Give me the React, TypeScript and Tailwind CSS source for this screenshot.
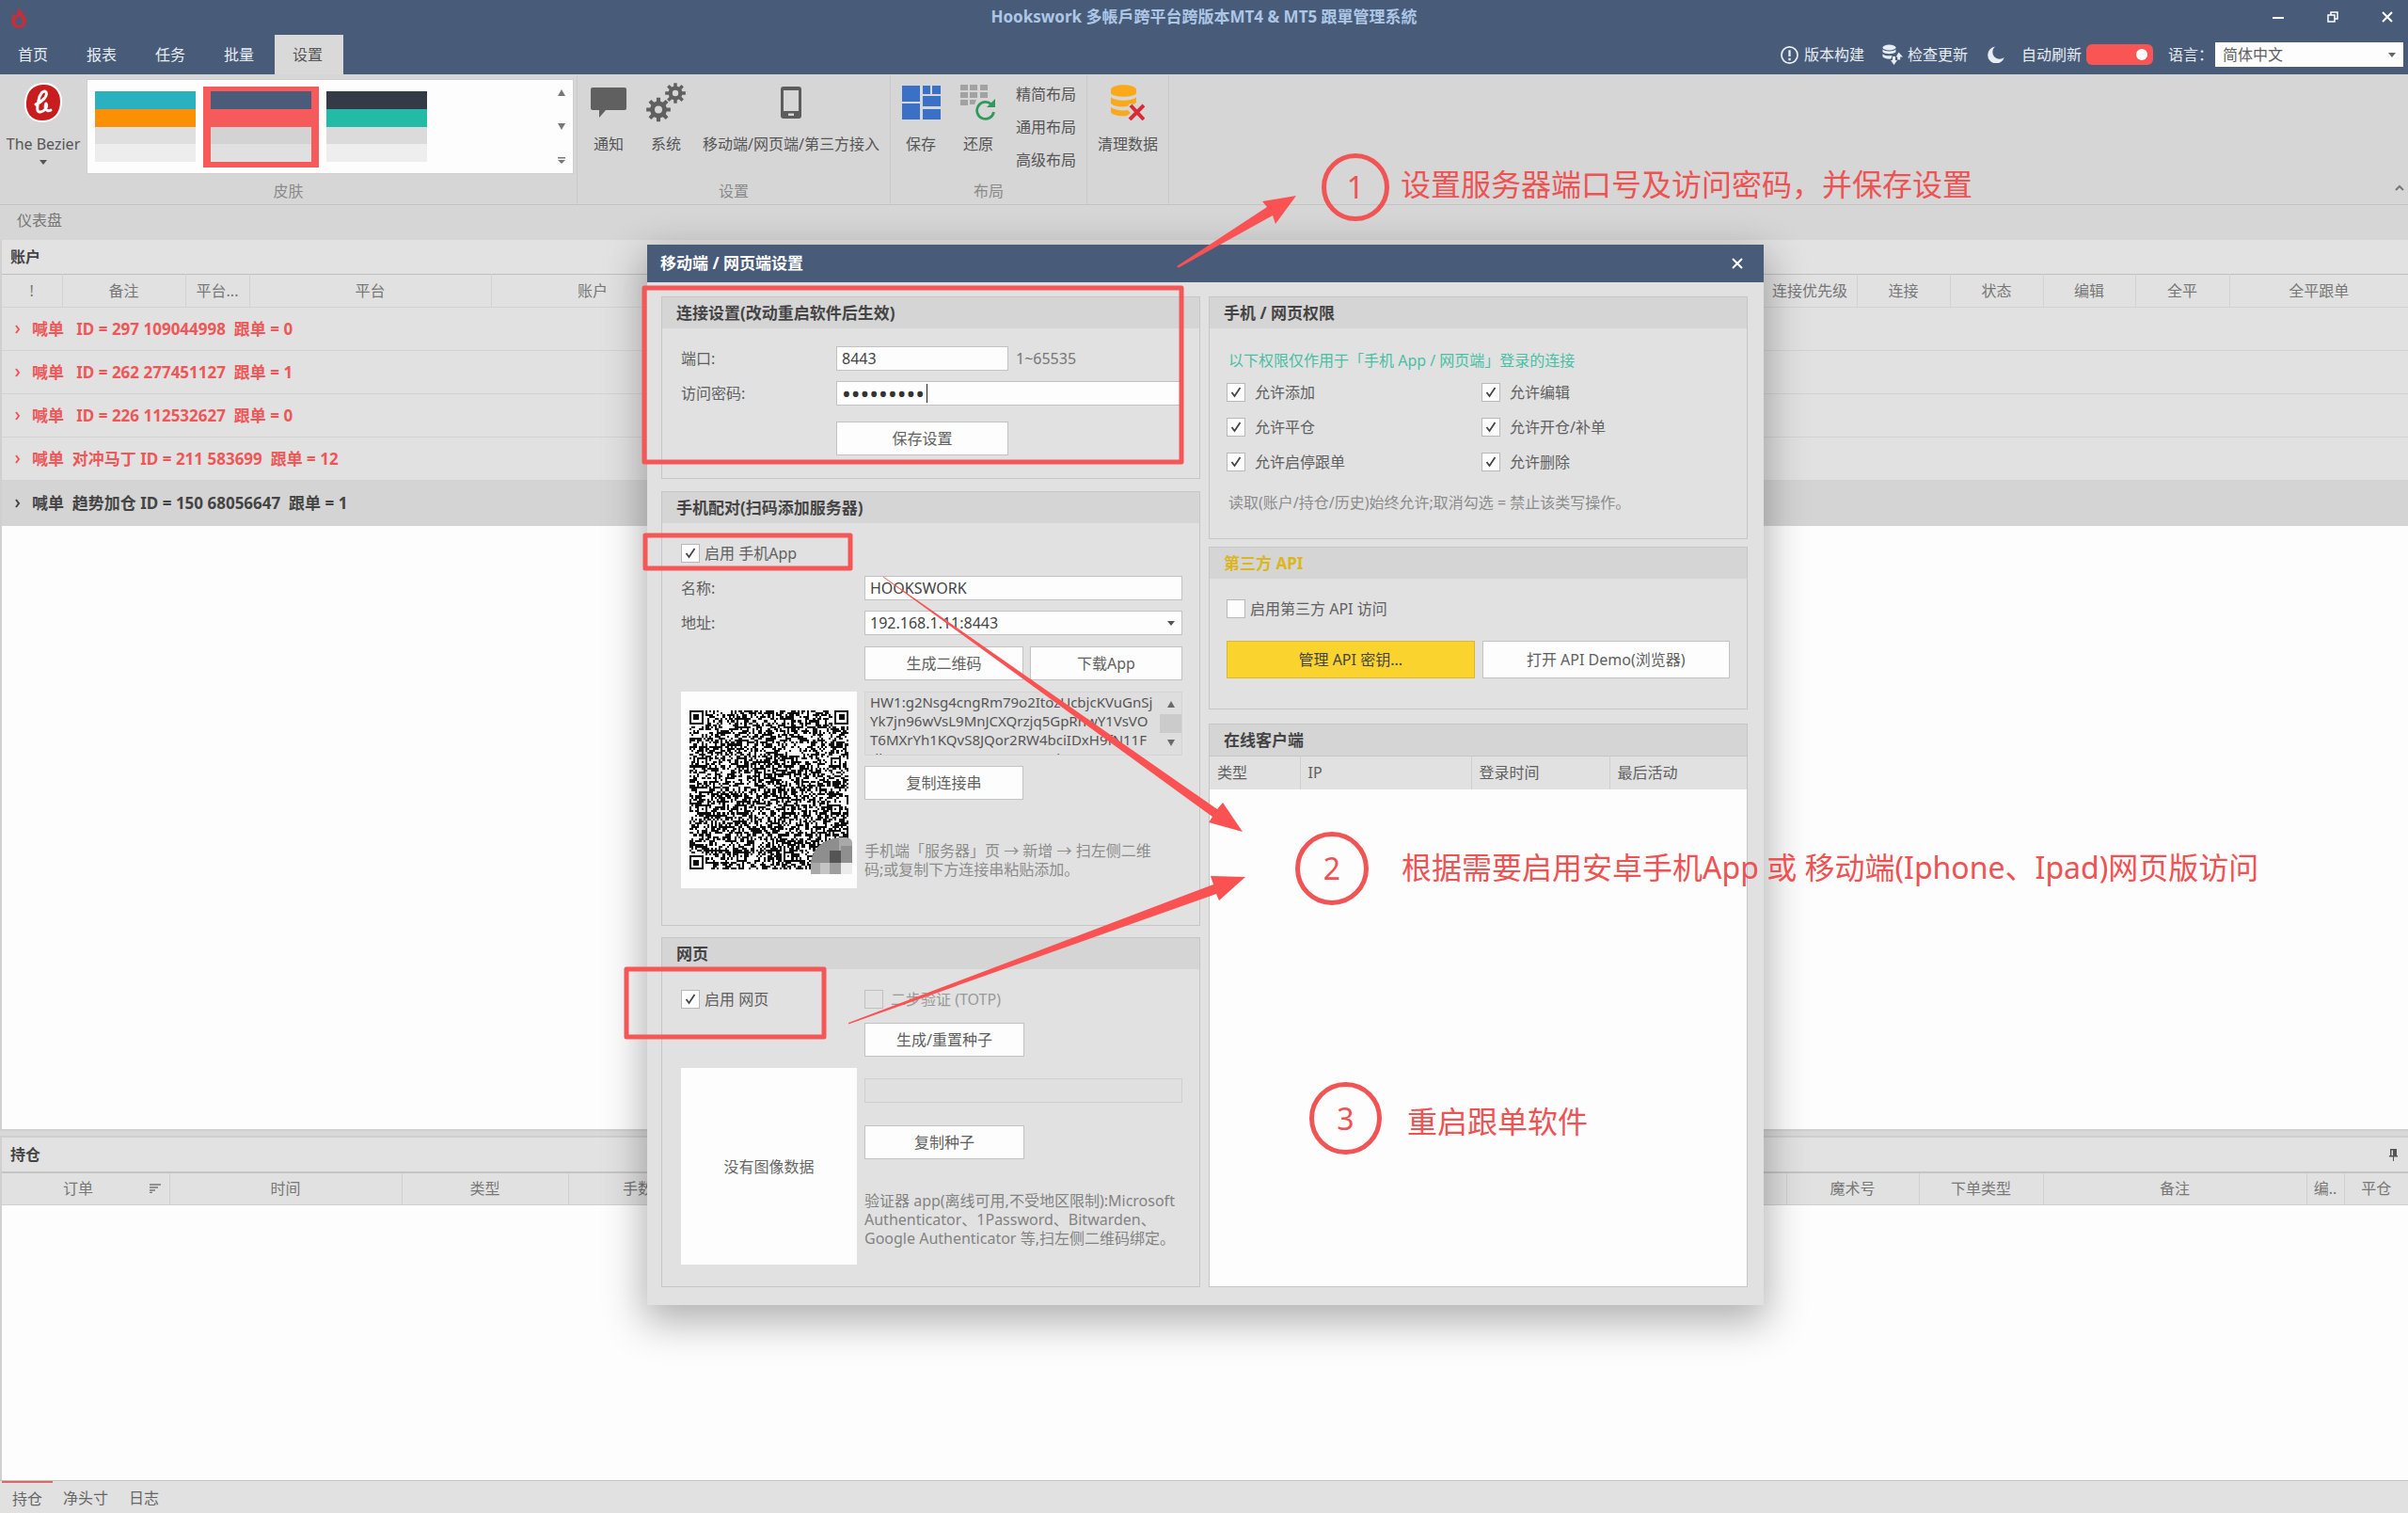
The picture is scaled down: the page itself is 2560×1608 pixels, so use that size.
import React from "react";

function gearPath(cx: number, cy: number, outer: number, inner: number, hole: number, teeth: number) {
  const step = (Math.PI * 2) / teeth;
  const point = (r: number, a: number) => `${(cx + r * Math.cos(a)).toFixed(2)} ${(cy + r * Math.sin(a)).toFixed(2)}`;
  let d = "";
  for (let i = 0; i < teeth; i++) {
    const a = i * step - Math.PI / 2;
    d += `${i === 0 ? "M" : "L"}${point(inner, a - step * 0.3)}`;
    d += `L${point(outer, a - step * 0.2)}L${point(outer, a + step * 0.2)}L${point(inner, a + step * 0.3)}`;
  }
  d += `ZM${cx - hole} ${cy}a${hole} ${hole} 0 1 0 ${hole * 2} 0a${hole} ${hole} 0 1 0 ${-hole * 2} 0Z`;
  return d;
}

const QR_SIZE = 81;

function qrPath() {
  const grid: boolean[][] = [];
  let seed = 20240611;
  for (let y = 0; y < QR_SIZE; y++) {
    grid.push([]);
    for (let x = 0; x < QR_SIZE; x++) {
      seed = (seed * 1103515245 + 12345) % 2147483648;
      grid[y].push(((seed >> 12) & 255) > 124);
    }
  }
  const square = (cx: number, cy: number, radius: number, dark: (ring: number) => boolean) => {
    for (let dy = -radius; dy <= radius; dy++)
      for (let dx = -radius; dx <= radius; dx++) {
        const x = cx + dx;
        const y = cy + dy;
        if (x < 0 || y < 0 || x >= QR_SIZE || y >= QR_SIZE) continue;
        grid[y][x] = dark(Math.max(Math.abs(dx), Math.abs(dy)));
      }
  };
  const spots = [6, 26, 50, 74];
  for (const cy of spots)
    for (const cx of spots) {
      const corner = (cx === 6 && cy === 6) || (cx === 74 && cy === 6) || (cx === 6 && cy === 74);
      if (!corner) square(cx, cy, 2, (r) => r !== 1);
    }
  square(3, 3, 4, (r) => r === 3 || r < 2);
  square(77, 3, 4, (r) => r === 3 || r < 2);
  square(3, 77, 4, (r) => r === 3 || r < 2);
  let d = "";
  for (let y = 0; y < QR_SIZE; y++) for (let x = 0; x < QR_SIZE; x++) if (grid[y][x]) d += `M${x} ${y}h1v1h-1z`;
  return d;
}

const QR_PATH = qrPath();

function QrCode() {
  return (
    <svg viewBox="0 0 81 81" className="block size-[169px]" shapeRendering="crispEdges" role="img" aria-label="二维码">
      <path d={QR_PATH} fill="#0c0c0c" />
    </svg>
  );
}

function Caret({ className = "" }: { className?: string }) {
  return (
    <svg viewBox="0 0 8 5" className={`h-[5px] w-2 ${className}`} fill="currentColor" aria-hidden="true">
      <path d="M0 0h8L4 5z" />
    </svg>
  );
}

function RibbonButton({ label, icon, className }: { label: string; icon: React.ReactNode; className: string }) {
  return (
    <button type="button" className={`flex flex-col items-center ${className}`}>
      <span className="flex h-[56px] items-center justify-center pb-[9px]">{icon}</span>
      <span className="leading-6 whitespace-nowrap">{label}</span>
    </button>
  );
}

function Swatch({ colors, selected = false }: { colors: [string, string, string, string]; selected?: boolean }) {
  return (
    <button
      type="button"
      aria-pressed={selected}
      aria-label="皮肤"
      className={`flex h-[86px] w-[123px] flex-col px-2 pt-[5px] pb-[6px] ${selected ? "bg-[#f65a5a]" : ""}`}
    >
      {colors.map((c) => (
        <span key={c} className={`w-full flex-1 ${c}`} />
      ))}
    </button>
  );
}

function Check({
  label,
  checked = false,
  disabled = false,
  gap = "gap-[5px]",
}: {
  label: string;
  checked?: boolean;
  disabled?: boolean;
  gap?: string;
}) {
  return (
    <label className={`flex w-fit items-center leading-6 ${gap} ${disabled ? "text-[#999]" : "text-[#606060]"}`}>
      <span className="relative size-[20px] shrink-0">
        <input
          type="checkbox"
          defaultChecked={checked}
          disabled={disabled}
          className="peer block size-[20px] appearance-none border border-[#b8b8b8] bg-[#fdfdfd] disabled:border-[#c0c0c0] disabled:bg-transparent"
        />
        <svg
          viewBox="0 0 20 20"
          className="pointer-events-none absolute inset-0 hidden size-5 peer-checked:block"
          fill="none"
          stroke="#444"
          strokeWidth="1.8"
          aria-hidden="true"
        >
          <path d="M5.500 10l3 4L14.500 5" />
        </svg>
      </span>
      <span className="whitespace-nowrap">{label}</span>
    </label>
  );
}

function Panel({
  title,
  titleColor = "text-[#444]",
  className = "",
  children,
}: {
  title: string;
  titleColor?: string;
  className?: string;
  children: React.ReactNode;
}) {
  return (
    <section className={`flex flex-col border border-[#c6c6c6] ${className}`}>
      <h3 className={`bg-[#d5d5d5] px-[15px] text-[17px] leading-[33px] font-bold ${titleColor}`}>{title}</h3>
      {children}
    </section>
  );
}

function Button({ children, className }: { children: React.ReactNode; className: string }) {
  return (
    <button type="button" className={`border text-center whitespace-nowrap ${className}`}>
      {children}
    </button>
  );
}

const whiteButton = "border-[#c2c2c2] bg-[#fdfdfd] text-[#606060]";

function ConnectionPanel() {
  return (
    <Panel title="连接设置(改动重启软件后生效)" className="h-[194px]">
      <div className="grid grid-cols-[165px_1fr] items-center pt-[19px] pr-[18px] pl-5">
        <label htmlFor="port" className="leading-6">
          端口:
        </label>
        <div className="flex items-center gap-2">
          <input id="port" defaultValue="8443" className="h-[26px] w-[183px] border border-[#c2c2c2] bg-[#fdfdfd] px-[5px] text-[#444] outline-none" />
          <span className="text-[#777]">1~65535</span>
        </div>
        <label htmlFor="password" className="mt-[11px] leading-6">
          访问密码:
        </label>
        <div className="mt-[11px] flex h-[26px] items-center overflow-hidden border border-[#c2c2c2] bg-[#fdfdfd] pl-[5px]">
          <input
            id="password"
            type="password"
            readOnly
            value="hookswork"
            className="h-6 w-[90px] bg-transparent text-[26px] leading-6 text-[#333] outline-none"
          />
          <span className="h-5 w-px bg-[#222]" />
        </div>
        <Button className={`col-start-2 mt-[17px] h-[36px] w-[183px] ${whiteButton}`}>保存设置</Button>
      </div>
    </Panel>
  );
}

const connectionString = [
  "HW1:g2Nsg4cngRm79o2ItozUcbjcKVuGnSj",
  "Yk7jn96wVsL9MnJCXQrzjq5GpRnwY1VsVO",
  "T6MXrYh1KQvS8JQor2RW4bciIDxH9fN11F",
  "dkpCIVTz0uTF2vrcCMMDp/ybZ1vVB4yVR",
].join("\n");

function PairingPanel() {
  return (
    <Panel title="手机配对(扫码添加服务器)" className="h-[462px]">
      <div className="pt-[20px] pr-[18px] pl-5">
        <Check label="启用 手机App" checked />
        <div className="mt-3 grid grid-cols-[195px_1fr] items-center gap-y-[11px]">
          <label htmlFor="name" className="leading-6">
            名称:
          </label>
          <input id="name" defaultValue="HOOKSWORK" className="h-[26px] border border-[#c2c2c2] bg-[#fdfdfd] px-[5px] text-[#444] outline-none" />
          <label htmlFor="address" className="leading-6">
            地址:
          </label>
          <div className="relative">
            <select id="address" className="block h-[26px] w-full appearance-none border border-[#c2c2c2] bg-[#fdfdfd] px-[5px] text-[#444] outline-none">
              <option>192.168.1.11:8443</option>
            </select>
            <Caret className="pointer-events-none absolute top-[11px] right-2 text-[#555]" />
          </div>
        </div>
        <div className="mt-[12px] flex justify-end gap-[7px]">
          <Button className={`h-[36px] w-[169px] ${whiteButton}`}>生成二维码</Button>
          <Button className={`h-[36px] w-[162px] ${whiteButton}`}>下载App</Button>
        </div>
        <div className="mt-[12px] flex gap-2">
          <div className="relative h-[209px] w-[187px] shrink-0 bg-[#fdfdfd] pt-5 pl-[9px]">
            <QrCode />
            <svg viewBox="0 0 44 39" className="absolute top-[155px] left-[138px] h-[39px] w-11" aria-hidden="true">
              <path d="M0 26C2 12 12 2 30 0V39H0z" fill="#8e8e8e" />
              <path d="M30 0h8q6 1 6 6v20H30z" fill="#a9a9a9" />
              <path d="M20 14h12v13H20z" fill="#555" />
              <path d="M32 9h12v18H32z" fill="#8f8f8f" />
              <path d="M0 27h10v12H0z" fill="#a8a8a8" />
              <path d="M10 27h10v12H10z" fill="#c4c4c4" />
              <path d="M20 27h12v12H20z" fill="#9e9e9e" />
              <path d="M32 27h12v12H32z" fill="#ececec" />
            </svg>
          </div>
          <div className="flex min-w-0 flex-1 flex-col items-start">
            <div className="flex h-[68px] w-full border border-[#d4d4d4] bg-[#dedede]">
              <textarea
                readOnly
                wrap="off"
                aria-label="连接串"
                defaultValue={connectionString}
                className="block h-full min-w-0 flex-1 resize-none overflow-hidden pl-[5px] text-[15px] leading-5 text-[#555] outline-none"
              />
              <div className="flex w-[23px] flex-col items-center justify-between py-[9px] text-[#6a6a6a]" aria-hidden="true">
                <svg viewBox="0 0 8 7" className="h-[7px] w-2" fill="currentColor">
                  <path d="M4 0l4 7H0z" />
                </svg>
                <span className="h-5 w-full bg-[#cbcbcb]" />
                <svg viewBox="0 0 8 7" className="h-[7px] w-2" fill="currentColor">
                  <path d="M0 0h8L4 7z" />
                </svg>
              </div>
            </div>
            <Button className={`mt-[11px] h-[36px] w-[169px] ${whiteButton}`}>复制连接串</Button>
            <p className="mt-[44px] leading-5 text-[#8c8c8c]">
              手机端「服务器」页 → 新增 → 扫左侧二维
              <br />
              码;或复制下方连接串粘贴添加。
            </p>
          </div>
        </div>
      </div>
    </Panel>
  );
}

function WebPanel() {
  return (
    <Panel title="网页" className="h-[372px]">
      <div className="flex gap-2 pt-[20px] pr-[18px] pl-5">
        <div className="w-[187px] shrink-0">
          <Check label="启用 网页" checked />
          <div className="mt-[61px] flex h-[209px] items-center justify-center bg-[#fdfdfd] text-[#666]">没有图像数据</div>
        </div>
        <div className="flex min-w-0 flex-1 flex-col items-start">
          <Check label="二步验证 (TOTP)" disabled gap="gap-[8px]" />
          <Button className={`mt-[13px] h-[36px] w-[170px] ${whiteButton}`}>生成/重置种子</Button>
          <input readOnly aria-label="种子" className="mt-[23px] h-[26px] w-full border border-[#cfcfcf] bg-[#e0e0e0]" />
          <Button className={`mt-[24px] h-[36px] w-[170px] ${whiteButton}`}>复制种子</Button>
          <p className="mt-[34px] leading-5 whitespace-nowrap text-[#838383]">
            验证器 app(离线可用,不受地区限制):Microsoft
            <br />
            Authenticator、1Password、Bitwarden、
            <br />
            Google Authenticator 等,扫左侧二维码绑定。
          </p>
        </div>
      </div>
    </Panel>
  );
}

function PermissionsPanel() {
  return (
    <Panel title="手机 / 网页权限" className="h-[258px]">
      <div className="pt-[22px] pr-[18px] pl-[18px]">
        <p className="pl-[2px] leading-6 text-[#48bfa5]">以下权限仅作用于「手机 App / 网页端」登录的连接</p>
        <div className="mt-[10px] grid grid-cols-[271px_1fr] gap-y-[13px]">
          <Check label="允许添加" checked gap="gap-[10px]" />
          <Check label="允许编辑" checked gap="gap-[10px]" />
          <Check label="允许平仓" checked gap="gap-[10px]" />
          <Check label="允许开仓/补单" checked gap="gap-[10px]" />
          <Check label="允许启停跟单" checked gap="gap-[10px]" />
          <Check label="允许删除" checked gap="gap-[10px]" />
        </div>
        <p className="mt-[19px] pl-[2px] leading-6 text-[#8c8c8c]">读取(账户/持仓/历史)始终允许;取消勾选 = 禁止该类写操作。</p>
      </div>
    </Panel>
  );
}

function ApiPanel() {
  return (
    <Panel title="第三方 API" titleColor="text-[#dbb61c]" className="mt-[8px] h-[173px]">
      <div className="pt-[20px] pr-[18px] pl-[18px]">
        <Check label="启用第三方 API 访问" />
        <div className="mt-[22px] flex gap-2">
          <Button className="h-[40px] flex-1 border-[#d9b92e] bg-[#fad32f] text-[#444]">管理 API 密钥...</Button>
          <Button className={`h-[40px] flex-1 ${whiteButton}`}>打开 API Demo(浏览器)</Button>
        </div>
      </div>
    </Panel>
  );
}

function ClientsPanel() {
  return (
    <Panel title="在线客户端" className="mt-[15px] flex-1 bg-[#fdfdfd]">
      <table className="w-full table-fixed border-t border-[#c6c6c6] text-left">
        <colgroup>
          <col className="w-[96px]" />
          <col className="w-[182px]" />
          <col className="w-[147px]" />
          <col />
        </colgroup>
        <thead>
          <tr className="h-[35px] bg-[#e1e1e1]">
            {["类型", "IP", "登录时间", "最后活动"].map((h) => (
              <th key={h} className="border-r border-[#cfcfcf] pl-[8px] font-normal last:border-r-0">
                {h}
              </th>
            ))}
          </tr>
        </thead>
      </table>
    </Panel>
  );
}

function Annotations() {
  return (
    <div className="pointer-events-none absolute inset-0 text-[32px] leading-10 whitespace-nowrap text-[#ee5253]">
      <svg viewBox="688 260 1187 1127" className="absolute top-0 left-0 h-[1127px] w-[1187px] overflow-visible" aria-hidden="true">
        <g fill="none" stroke="#f55656" strokeWidth="5" strokeLinejoin="round">
          <path d="M685 306h571v185H685z" />
          <path d="M686 569h218v35H686z" />
          <path d="M666 1030h210v72H666z" />
        </g>
        <g fill="#fa5252">
          <path d="M1251 283L1347 220L1342 214L1378 208L1356 238L1353 229L1253 284.500z" />
          <path d="M938 612L1294 860L1300 853L1321 884L1285 874L1289 868L939 613.500z" />
          <path d="M902 1087L1290 940L1287 931L1324 932L1296 957L1293 950L902 1088.500z" />
        </g>
      </svg>
      <span className="absolute top-[-97px] left-[717px] flex size-[72px] items-center justify-center rounded-full border-5 border-[#f05454]">1</span>
      <span className="absolute top-[-84px] left-[801px]">设置服务器端口号及访问密码，并保存设置</span>
      <span className="absolute top-[624px] left-[689px] flex size-[78px] items-center justify-center rounded-full border-5 border-[#f05454]">2</span>
      <span className="absolute top-[642px] left-[802px]">根据需要启用安卓手机App 或 移动端(Iphone、Ipad)网页版访问</span>
      <span className="absolute top-[890px] left-[704px] flex size-[77px] items-center justify-center rounded-full border-5 border-[#f05454]">3</span>
      <span className="absolute top-[912px] left-[808px]">重启跟单软件</span>
    </div>
  );
}

function SettingsDialog() {
  return (
    <div className="absolute inset-x-0 top-[260px] flex justify-center pl-[3px]">
      <div
        role="dialog"
        aria-labelledby="dialog-title"
        className="relative w-[1187px] bg-[#e1e1e1] text-[#606060] shadow-[0_14px_40px_4px_rgba(0,0,0,0.3)]"
      >
        <header className="flex h-[40px] items-center justify-between bg-[#485b79] pr-[18px] pl-[14px] text-white">
          <h2 id="dialog-title" className="text-[17px] font-bold">
            移动端 / 网页端设置
          </h2>
          <button type="button" aria-label="关闭" className="p-1">
            <svg viewBox="0 0 12 12" className="size-3" fill="none" stroke="currentColor" strokeWidth="2">
              <path d="M1 1l10 10M11 1L1 11" />
            </svg>
          </button>
        </header>
        <div className="grid grid-cols-2 gap-[9px] pt-[15px] pr-[17px] pb-[19px] pl-[15px]">
          <div className="flex flex-col">
            <ConnectionPanel />
            <div className="h-[13px]" />
            <PairingPanel />
            <div className="h-[12px]" />
            <WebPanel />
          </div>
          <div className="flex flex-col">
            <PermissionsPanel />
            <ApiPanel />
            <ClientsPanel />
          </div>
        </div>
        <Annotations />
      </div>
    </div>
  );
}

function TitleBar() {
  return (
    <div className="grid h-[37px] grid-cols-[1fr_auto_1fr] items-center pb-[2px]">
      <svg viewBox="0 0 18 24" className="ml-[11px] h-6 w-[18px]" aria-hidden="true">
        <path d="M8 0C9 5 17 9 17 16a8 8 0 0 1-16 0C1 12 3 11 4 8c1 1 1.500 2 1.500 3C8 8 8.500 4 8 0zM9.500 10C8 13 5.500 14 5.500 17a3.700 3.700 0 0 0 7.400 0C13 14 10.500 13 9.500 10z" fill="#c2303c" fillRule="evenodd" />
      </svg>
      <h1 className="text-[17px] font-bold text-[#adc6e6]">Hookswork 多帳戶跨平台跨版本MT4 &amp; MT5 跟單管理系統</h1>
      <div className="flex justify-end gap-[46px] pr-4 text-white">
        <button type="button" aria-label="最小化">
          <svg viewBox="0 0 12 12" className="size-3" stroke="currentColor" strokeWidth="2">
            <path d="M0 7h12" />
          </svg>
        </button>
        <button type="button" aria-label="还原窗口">
          <svg viewBox="0 0 12 12" className="size-3" fill="none" stroke="currentColor" strokeWidth="1.500">
            <path d="M1 4h7v7H1zM4 4V1h7v7H8" />
          </svg>
        </button>
        <button type="button" aria-label="关闭窗口">
          <svg viewBox="0 0 12 12" className="size-3" fill="none" stroke="currentColor" strokeWidth="2">
            <path d="M1 1l10 10M11 1L1 11" />
          </svg>
        </button>
      </div>
    </div>
  );
}

function TabBar() {
  return (
    <div className="flex h-[42px] text-[#e8edf4]">
      <nav className="flex">
        {["首页", "报表", "任务", "批量"].map((t) => (
          <button key={t} type="button" className="w-[73px] pr-[3px]">
            {t}
          </button>
        ))}
        <button type="button" className="w-[73px] bg-[#d9d9d9] pr-[3px] text-[#555]">
          设置
        </button>
      </nav>
      <div className="ml-auto flex items-center pr-[5px]">
        <button type="button" className="flex items-center gap-[6px]">
          <svg viewBox="0 0 20 20" className="size-[19px]" fill="none" stroke="currentColor" strokeWidth="1.800" aria-hidden="true">
            <circle cx="10" cy="10" r="9" />
            <path d="M10 4.500v7M10 13.500v2.500" strokeWidth="2.400" />
          </svg>
          版本构建
        </button>
        <button type="button" className="ml-[19px] flex items-center gap-[5px]">
          <svg viewBox="0 0 22 22" className="size-[22px]" fill="currentColor" aria-hidden="true">
            <ellipse cx="7.500" cy="3.500" rx="7" ry="3" />
            <path d="M.5 5.500c2 2.500 12 2.500 14 0v2.800c-2 2.500-12 2.500-14 0zM.5 10.200c2 2.300 7 2.500 10 1.800l-1 3.500C6 16 2 15 .5 13.200z" />
            <path d="M17.500 8.500L22 13.500h-2.800v3h-3v-3h-1.500zM11 13h3v4h2l-3.500 5L9 17h2z" />
          </svg>
          检查更新
        </button>
        <button type="button" aria-label="深色模式" className="ml-[21px]">
          <svg viewBox="0 0 18 18" className="size-[18px]" fill="currentColor">
            <path d="M8 .5a9 9 0 1 0 9.800 11.500A7 7 0 0 1 8 .5z" />
          </svg>
        </button>
        <span className="ml-[18px]">自动刷新</span>
        <button type="button" role="switch" aria-checked="true" aria-label="自动刷新" className="ml-[5px] flex h-[22px] w-[71px] items-center justify-end rounded-[6px] bg-[#f95555] pr-[6px]">
          <span className="size-3 rounded-full bg-white" />
        </button>
        <label htmlFor="language" className="ml-[16px]">
          语言：
        </label>
        <div className="relative ml-[2px]">
          <select id="language" className="block h-[26px] w-[200px] appearance-none bg-[#fdfdfd] px-2 text-[#606060] outline-none">
            <option>简体中文</option>
          </select>
          <Caret className="pointer-events-none absolute top-[11px] right-2 text-[#666]" />
        </div>
      </div>
    </div>
  );
}

const groupClass = "relative flex flex-col border-r border-[#c9c9c9]";

function Ribbon() {
  return (
    <div className="flex h-[139px] border-b border-[#c4c4c4] bg-[#d6d6d6] pt-[1px] text-[#555]">
      <div className={`${groupClass} w-[614px]`}>
        <div className="flex">
          <button type="button" className="flex w-[92px] flex-col items-center pt-2">
            <svg viewBox="0 0 42 42" className="size-[42px]" aria-hidden="true">
              <path d="M20 1C33 0 40 9 40 20c0 13-8 21-20 21C8 41 1 33 2 20 3 9 9 2 20 1z" fill="#c91c1f" stroke="#fff" strokeWidth="2" />
              <path d="M13 23C20 20 26 14 24 10C21 7 17 12 16 19C14 26 14 32 18 31C23 30 26 25 24 22C22 26 24 32 29 29" fill="none" stroke="#fff" strokeWidth="3" strokeLinecap="round" strokeLinejoin="round" />
            </svg>
            <span className="mt-[11px] leading-6 whitespace-nowrap">The Bezier</span>
            <Caret className="mt-[5px]" />
          </button>
          <div className="mt-1 flex h-[101px] w-[518px] items-start border border-[#cfcfcf] bg-[#fdfdfd] pt-[7px] pr-[6px]">
            <Swatch colors={["bg-[#29b1c0]", "bg-[#fb9004]", "bg-[#dfdfdf]", "bg-[#ededed]"]} />
            <Swatch selected colors={["bg-[#4a5c7a]", "bg-[#f75a5b]", "bg-[#d3d3d3]", "bg-[#e0e0e0]"]} />
            <Swatch colors={["bg-[#343b46]", "bg-[#21bba6]", "bg-[#dbdbdb]", "bg-[#eeeeef]"]} />
            <div className="ml-auto flex h-[82px] w-3 flex-col items-center justify-between pt-[3px] text-[#777]">
              <svg viewBox="0 0 8 7" className="h-[7px] w-2" fill="currentColor" aria-hidden="true">
                <path d="M4 0l4 7H0z" />
              </svg>
              <svg viewBox="0 0 8 7" className="h-[7px] w-2" fill="currentColor" aria-hidden="true">
                <path d="M0 0h8L4 7z" />
              </svg>
              <svg viewBox="0 0 8 7" className="h-[7px] w-2" fill="currentColor" aria-hidden="true">
                <path d="M0 0h8v1.500H0zM0 3h8L4 7z" />
              </svg>
            </div>
          </div>
        </div>
        <span className="mt-auto pb-[2px] text-center leading-6 text-[#8a8a8a]">皮肤</span>
      </div>
      <div className={`${groupClass} w-[333px]`}>
        <div className="flex pt-[5px] pl-1">
          <RibbonButton
            label="通知"
            className="w-[58px]"
            icon={
              <svg viewBox="0 0 38 32" className="h-8 w-[38px]" fill="#606060">
                <path d="M2 0h34q2 0 2 2v20q0 2-2 2H16l-7 8v-8H2q-2 0-2-2V2Q0 0 2 0z" />
              </svg>
            }
          />
          <RibbonButton
            label="系统"
            className="w-[64px]"
            icon={
              <svg viewBox="0 0 42 42" className="size-[42px]" fill="#606060" fillRule="evenodd">
                <path d={gearPath(13, 28.5, 13, 9, 4, 8)} />
                <path d={gearPath(31, 11, 11, 7.5, 3.2, 8)} />
              </svg>
            }
          />
          <RibbonButton
            label="移动端/网页端/第三方接入"
            className="w-[202px]"
            icon={
              <svg viewBox="0 0 22 34" className="h-[34px] w-[22px]" fill="#5c5c5c" fillRule="evenodd">
                <path d="M3 0h16q3 0 3 3v28q0 3-3 3H3q-3 0-3-3V3Q0 0 3 0zM3 4v22h16V4zM8 28.500v2.500h6v-2.500z" />
              </svg>
            }
          />
        </div>
        <span className="mt-auto pb-[2px] text-center leading-6 text-[#8a8a8a]">设置</span>
      </div>
      <div className={`${groupClass} w-[209px]`}>
        <div className="flex pt-[5px]">
          <RibbonButton
            label="保存"
            className="w-[64px]"
            icon={
              <svg viewBox="0 0 41 36" className="h-9 w-[41px]" fill="#3a71c6">
                <path d="M0 0h19v17H0zM0 19h19v17H0zM22 0h8v9h-8zM32 0h9v9h-9zM22 11h19v11H22zM22 25h19v11H22z" />
              </svg>
            }
          />
          <RibbonButton
            label="还原"
            className="w-[58px]"
            icon={
              <svg viewBox="0 0 38 38" className="size-[38px]">
                <path d="M0 0h8v6H0zM10 0h8v6h-8zM21 0h8v6h-8zM0 8h8v6H0zM10 8h8v6h-8zM21 8h8v6h-8zM0 16h8v6H0zM10 16h7l-2 5h-5z" fill="#a2a2a2" />
                <path d="M33 21a9 9 0 1 0 2.500 8" fill="none" stroke="#2f9a5b" strokeWidth="2.800" />
                <path d="M37 15v9h-9z" fill="#2f9a5b" />
              </svg>
            }
          />
          <div className="mt-[3px] ml-[11px] flex flex-col gap-[11px] leading-6">
            <button type="button">精简布局</button>
            <button type="button">通用布局</button>
            <button type="button">高级布局</button>
          </div>
        </div>
        <span className="mt-auto pb-[2px] text-center leading-6 text-[#8a8a8a]">布局</span>
      </div>
      <div className={`${groupClass} w-[87px]`}>
        <div className="flex pt-[5px]">
          <RibbonButton
            label="清理数据"
            className="w-full"
            icon={
              <svg viewBox="0 0 36 38" className="h-[38px] w-9" fill="#fba919">
                <path d="M0 5C1-1.500 26-1.500 27 5v4C25 14 2 14 0 9z" />
                <path d="M0 13c4 5 23 5 27 0v6l-3 2-4-1-2 3C10 24 3 23 0 20z" />
                <path d="M0 24c4 3 12 4 18 3l3 3-4 3C9 34 1 32 0 29z" />
                <path d="M21 22l14 15M35 22L20 37" stroke="#da2a35" strokeWidth="4" fill="none" />
              </svg>
            }
          />
        </div>
      </div>
      <button type="button" aria-label="折叠功能区" className="mt-auto mr-1 mb-[14px] ml-auto text-[#777]">
        <svg viewBox="0 0 10 7" className="h-[7px] w-[10px]" fill="none" stroke="currentColor" strokeWidth="2">
          <path d="M1 6l4-4 4 4" />
        </svg>
      </button>
    </div>
  );
}

const accountRows = [
  { text: "喊单   ID = 297 109044998  跟单 = 0" },
  { text: "喊单   ID = 262 277451127  跟单 = 1" },
  { text: "喊单   ID = 226 112532627  跟单 = 0" },
  { text: "喊单  对冲马丁 ID = 211 583699  跟单 = 12" },
  { text: "喊单  趋势加仓 ID = 150 68056647  跟单 = 1", selected: true },
];

const accountHeads = ["!", "备注", "平台...", "平台", "账户", "", "连接优先级", "连接", "状态", "编辑", "全平", "全平跟单"];

function AccountsSection() {
  return (
    <section className="min-h-0 flex-[945_1_0%] overflow-hidden border-l-2 border-[#d0d0d0] bg-[#fdfdfd]">
      <h2 className="h-[36px] bg-[#e2e2e2] pl-[9px] leading-9 font-bold text-[#444]">账户</h2>
      <table className="w-full table-fixed border-t border-[#bfbfbf] bg-[#e1e1e1]">
        <colgroup>
          <col className="w-[64px]" />
          <col className="w-[131px]" />
          <col className="w-[68px]" />
          <col className="w-[257px]" />
          <col className="w-[216px]" />
          <col />
          <col className="w-[100px]" />
          <col className="w-[99px]" />
          <col className="w-[99px]" />
          <col className="w-[98px]" />
          <col className="w-[100px]" />
          <col className="w-[190px]" />
        </colgroup>
        <thead>
          <tr className="h-[35px]">
            {accountHeads.map((h, i) => (
              <th key={i} className="border-r border-b border-[#d3d3d3] font-normal whitespace-nowrap text-[#777] last:border-r-0">
                {h}
              </th>
            ))}
          </tr>
        </thead>
        <tbody>
          {accountRows.map((r) => (
            <tr key={r.text} className={r.selected ? "h-[48px] bg-[#d4d4d4] text-[#444]" : "h-[46px] border-b border-[#d3d3d3] text-[#ee5757]"}>
              <td colSpan={12} className="pl-[14px] text-[17px] font-bold">
                <span className="flex items-center gap-[12px]">
                  <svg viewBox="0 0 6 10" className="h-[10px] w-[6px]" fill="none" stroke="currentColor" strokeWidth="2" aria-hidden="true">
                    <path d="M1 1l3 4-3 4" />
                  </svg>
                  <span className="whitespace-pre">{r.text}</span>
                </span>
              </td>
            </tr>
          ))}
        </tbody>
      </table>
    </section>
  );
}

const positionHeads = ["订单", "时间", "类型", "手数", "", "魔术号", "下单类型", "备注", "编..", "平仓"];

function PositionsSection() {
  return (
    <section className="min-h-0 flex-[364_1_0%] overflow-hidden border-l-2 border-[#d0d0d0] bg-[#fdfdfd]">
      <div className="flex h-[36px] items-center justify-between bg-[#e2e2e2] pr-[11px] pl-[9px]">
        <h2 className="font-bold text-[#444]">持仓</h2>
        <button type="button" aria-label="固定" className="text-[#555]">
          <svg viewBox="0 0 9 13" className="h-[13px] w-[9px]" fill="currentColor">
            <path d="M1 0h7v7h1v1.500H5V13H4V8.500H0V7h1zM2.500 1.500V7H4V1.500z" fillRule="evenodd" />
          </svg>
        </button>
      </div>
      <table className="w-full table-fixed border-t-2 border-[#c4c4c4] bg-[#e1e1e1]">
        <colgroup>
          <col className="w-[178px]" />
          <col className="w-[247px]" />
          <col className="w-[177px]" />
          <col className="w-[148px]" />
          <col />
          <col className="w-[141px]" />
          <col className="w-[132px]" />
          <col className="w-[280px]" />
          <col className="w-[40px]" />
          <col className="w-[68px]" />
        </colgroup>
        <thead>
          <tr className="h-[34px]">
            {positionHeads.map((h, i) => (
              <th key={i} className="border-r border-b border-[#d0d0d0] font-normal whitespace-nowrap text-[#777] last:border-r-0">
                {i === 0 ? (
                  <span className="flex items-center pr-[9px] pl-[65px]">
                    {h}
                    <svg viewBox="0 0 12 10" className="ml-auto h-[10px] w-3" stroke="currentColor" strokeWidth="1.500" aria-hidden="true">
                      <path d="M0 1h12M0 4h9M0 7h6M0 9.500h3" />
                    </svg>
                  </span>
                ) : (
                  h
                )}
              </th>
            ))}
          </tr>
        </thead>
      </table>
    </section>
  );
}

export default function App() {
  return (
    <div
      lang="zh-CN"
      className="relative flex h-screen flex-col overflow-hidden bg-[#d6d6d6] font-['Noto_Sans','Noto_Sans_CJK_SC',sans-serif] text-[16px] leading-6 text-[#606060]"
    >
      <header className="bg-[#485c7a]">
        <TitleBar />
        <TabBar />
      </header>
      <Ribbon />
      <div className="h-[37px] pl-[18px] leading-8 text-[#777]">仪表盘</div>
      <AccountsSection />
      <div className="h-[9px] border-y-2 border-[#cfcfcf] bg-[#d9d9d9]" />
      <PositionsSection />
      <nav className="flex h-[35px] border-t border-[#c4c4c4] bg-[#e1e1e1] text-[#666]">
        <button type="button" className="ml-[2px] h-[35px] border-t-2 border-[#d86a6a] px-[11px]">
          持仓
        </button>
        <button type="button" className="px-[11px] pt-[1px]">
          净头寸
        </button>
        <button type="button" className="px-[11px] pt-[1px]">
          日志
        </button>
      </nav>
      <SettingsDialog />
    </div>
  );
}
